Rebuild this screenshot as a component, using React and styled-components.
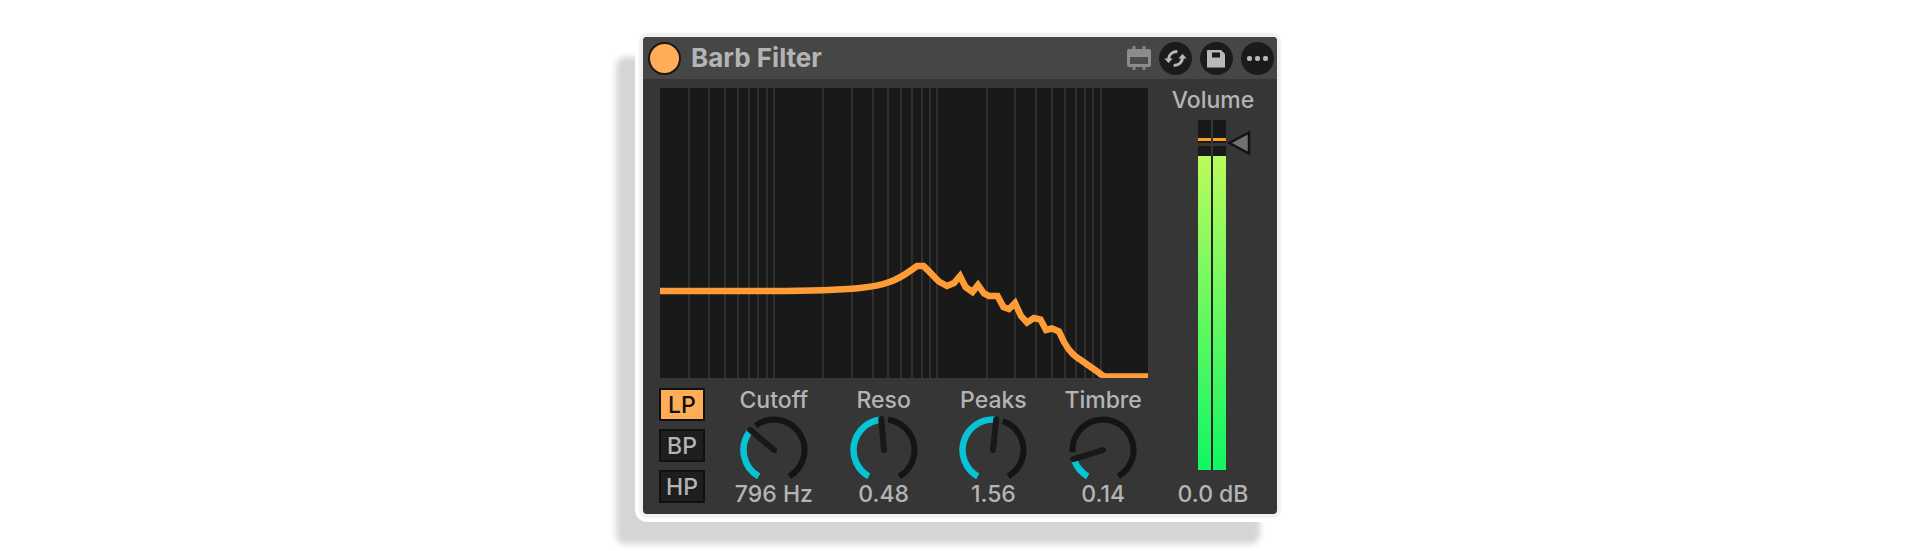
import React, { useState } from 'react';
import styled, { createGlobalStyle } from 'styled-components';

const GlobalStyle = createGlobalStyle`
  * {
    box-sizing: border-box;
  }

  body {
    margin: 0;
    background-color: #fff;
    font-family: Inter, 'Liberation Sans', sans-serif;
  }
`;

const Page = styled.main`
  display: flex;
  justify-content: center;
  padding: 29px 0 30px;
`;

const Frame = styled.div`
  width: 100%;
  max-width: 650px;
  padding: 8px;
  background-color: #fff;
  border-radius: 12px;
  box-shadow: -22px 25px 6px -3px #d5d5d5;
`;

const Device = styled.section`
  color: #b4b4b4;
  background-color: #363636;
  border-radius: 4px;
  box-shadow: 0 0 2px 4px #f0f0f0;
`;

const Header = styled.header`
  display: flex;
  align-items: center;
  height: 42px;
  padding: 0 3px 0 5px;
  background-color: #464646;
  border-radius: 4px 4px 0 0;
`;

const PowerButton = styled.button`
  width: 33px;
  height: 33px;
  padding: 0;
  border: 2px solid #1c1813;
  border-radius: 50%;
  background-color: ${({ $on }) => ($on ? '#ffad56' : '#1c1c1c')};
  cursor: pointer;
`;

const Title = styled.h1`
  flex: 1;
  margin: 0 0 0 10px;
  font-size: 26px;
  font-weight: 700;
  line-height: 30px;
`;

const Actions = styled.div`
  display: flex;
  align-items: center;
  gap: 8px;
`;

const IconButton = styled.button`
  display: flex;
  padding: 0;
  border: none;
  border-radius: 50%;
  background-color: ${({ $plain }) => ($plain ? 'transparent' : '#1b1b1b')};
  color: #b8b8b8;
  cursor: pointer;
`;

const Body = styled.div`
  display: flex;
  padding: 9px 9px 8px 16px;
`;

const Main = styled.div`
  flex: 1;
`;

const GraphWrapper = styled.div`
  margin: 0 10px 10px 1px;

  svg {
    display: block;
    width: 100%;
    height: auto;
    background-color: #191919;
  }
`;

const Controls = styled.div`
  display: flex;
  gap: 14px;
`;

const Modes = styled.div`
  display: flex;
  flex-direction: column;
  gap: 8px;
`;

const Mode = styled.label`
  position: relative;
  display: flex;
  justify-content: center;
  align-items: center;
  width: 46px;
  height: 33px;
  border: 2px solid #111;
  font-size: 23px;
  font-weight: 500;
  line-height: 24px;
  color: ${({ $active }) => ($active ? '#111' : '#b4b4b4')};
  background-color: ${({ $active }) => ($active ? '#ffad56' : '#1e1e1e')};
  cursor: pointer;
`;

const HiddenInput = styled.input`
  position: absolute;
  inset: 0;
  width: 100%;
  height: 100%;
  margin: 0;
  opacity: 0;
  cursor: pointer;
`;

const VolumeInput = styled(HiddenInput)`
  writing-mode: vertical-lr;
  direction: rtl;
`;

const Knobs = styled.div`
  flex: 1;
  display: grid;
  grid-template-columns: repeat(4, 1fr);
`;

const KnobWrapper = styled.div`
  display: flex;
  flex-direction: column;
  align-items: center;
`;

const Label = styled.label`
  font-size: 23px;
  font-weight: 500;
  line-height: 24px;
`;

const Value = styled.output`
  font-size: 23px;
  font-weight: 500;
  line-height: 24px;
`;

const Dial = styled.div`
  position: relative;

  svg {
    display: block;
  }
`;

const VolumeWrapper = styled.div`
  display: flex;
  flex-direction: column;
  align-items: center;
  width: 110px;
`;

const MeterWrapper = styled.div`
  position: relative;
  margin: 8px 0 auto;

  svg {
    display: block;
  }
`;

const MODES = ['LP', 'BP', 'HP'];

const KNOBS = [
  { id: 'cutoff', name: 'Cutoff', min: 20, max: 20000, initial: 796, angle: -50, unit: ' Hz' },
  { id: 'reso', name: 'Reso', min: 0, max: 1, initial: 0.48, angle: -5 },
  { id: 'peaks', name: 'Peaks', min: 0, max: 3, initial: 1.56, angle: 6 },
  { id: 'timbre', name: 'Timbre', min: 0, max: 1, initial: 0.14, angle: -107 },
];

const CURVE =
  'M0 203H112C150 203 175 202.5 200 200C226 197.5 238 191.5 250 183L257 178H263.5' +
  'C270 184 275 190 279 193.5L287 198L294 195L300 188L305.5 199L312.5 204L318 197' +
  'L324 205.5L329 208H337.5L343.5 219L349 221L355 215L361 228L367 234.5L374 230' +
  'L380.5 231.5L386 242L392 240.5L399 243.5L404 254C410 265 416 269 421.5 272.5L438 284' +
  'Q443 288.5 446 288.5H488';

// vertical rules on a log scale, 20 Hz to 20 kHz
const getGridLines = () => {
  const lines = [];
  [10, 100, 1000].forEach((decade) => {
    for (let i = 2; i <= 10; i += 1) {
      const freq = decade * i;
      if (freq > 20) {
        lines.push(Math.round((Math.log10(freq / 20) / 3) * 490));
      }
    }
  });
  return lines;
};

const polar = (angle, r) => {
  const rad = (angle * Math.PI) / 180;
  return `${(35 + r * Math.sin(rad)).toFixed(2)} ${(35 - r * Math.cos(rad)).toFixed(2)}`;
};

const arc = (from, to) =>
  `M${polar(from, 30.5)}A30.5 30.5 0 ${to - from > 180 ? 1 : 0} 1 ${polar(to, 30.5)}`;

const Knob = ({ id, name, min, max, initial, angle, unit = '' }) => {
  const [value, setValue] = useState(initial);
  const current = Math.max(
    -146,
    Math.min(146, angle + ((value - initial) / (max - min)) * 300),
  );

  return (
    <KnobWrapper>
      <Label htmlFor={id}>{name}</Label>
      <Dial>
        <svg width="70" height="70" viewBox="0 -3 70 70" fill="none" aria-hidden="true">
          {current < 137 && (
            <path d={arc(current + 13, 150)} stroke="#141414" strokeWidth="6" />
          )}
          <path d={arc(-150, current - 3)} stroke="#06c3d6" strokeWidth="6.5" />
          <path
            d={`M35 35L${polar(current, 31)}`}
            stroke="#181818"
            strokeWidth="6"
            strokeLinecap="round"
          />
        </svg>
        <HiddenInput
          id={id}
          type="range"
          min={min}
          max={max}
          step={unit ? 1 : 0.01}
          value={value}
          onChange={(e) => setValue(Number(e.target.value))}
        />
      </Dial>
      <Value htmlFor={id}>{unit ? `${value}${unit}` : value.toFixed(2)}</Value>
    </KnobWrapper>
  );
};

const Graph = () => (
  <GraphWrapper>
    <svg viewBox="0 0 488 290" fill="none" role="img" aria-label="Frequency response">
      {getGridLines().map((x) => (
        <rect key={x} x={x - 1} y="0" width="2" height="290" fill="#2f2f2f" />
      ))}
      <path d={CURVE} stroke="#ff9c38" strokeWidth="6.5" />
    </svg>
  </GraphWrapper>
);

const Volume = () => {
  const [volume, setVolume] = useState(0);

  return (
    <VolumeWrapper>
      <Label htmlFor="volume">Volume</Label>
      <MeterWrapper>
        <svg width="78" height="350" viewBox="0 0 78 350" aria-hidden="true">
          <defs>
            <linearGradient id="level" x1="0" y1="0" x2="0" y2="1">
              <stop offset="0" stopColor="#bafb5c" />
              <stop offset="1" stopColor="#10f764" />
            </linearGradient>
          </defs>
          {[24, 39].map((x) => (
            <g key={x}>
              <rect x={x} y="0" width="13" height="23" fill="#191919" />
              <rect x={x} y="18" width="13" height="3" fill="#f5a01e" />
              <rect x={x} y="26" width="13" height="10" fill="#191919" />
              <rect x={x} y="36" width="13" height="314" fill="url(#level)" />
            </g>
          ))}
          <rect x="37" y="36" width="2" height="314" fill="#242424" />
          <path
            d="M55.5 23L75 12.5V33.5Z"
            fill="#707070"
            stroke="#111"
            strokeWidth="2.5"
            transform={`translate(0 ${-volume * 3})`}
          />
        </svg>
        <VolumeInput
          id="volume"
          type="range"
          min="-70"
          max="6"
          step="0.1"
          value={volume}
          onChange={(e) => setVolume(Number(e.target.value))}
        />
      </MeterWrapper>
      <Value htmlFor="volume">{volume.toFixed(1)} dB</Value>
    </VolumeWrapper>
  );
};

const App = () => {
  const [power, setPower] = useState(true);
  const [mode, setMode] = useState('LP');

  return (
    <Page>
      <GlobalStyle />
      <Frame>
        <Device>
          <Header>
            <PowerButton
              type="button"
              aria-label="Device on"
              aria-pressed={power}
              $on={power}
              onClick={() => setPower(!power)}
            />
            <Title>Barb Filter</Title>
            <Actions>
              <IconButton type="button" aria-label="Open editor" $plain>
                <svg width="24" height="24" viewBox="0 0 24 24">
                  <path d="M5.5 0h3v4h-3zM15.5 0h3v4h-3zM5.500 20h3v4h-3zM15.5 20h3v4h-3z" fill="#858585" />
                  <rect x="0" y="3" width="24" height="18" rx="2" fill="#8c8c8c" />
                  <rect x="3" y="11" width="18" height="7" fill="#4b4b4b" />
                </svg>
              </IconButton>
              <IconButton type="button" aria-label="Swap preset">
                <svg width="33" height="33" viewBox="0 0 33 33">
                  <g id="swap">
                    <path
                      d="M18.3 9.5C13.5 9.5 10 12.5 9.5 17"
                      fill="none"
                      stroke="currentColor"
                      strokeWidth="3"
                    />
                    <path d="M5.3 16.5H13.7L9.5 21Z" fill="currentColor" />
                  </g>
                  <use href="#swap" transform="rotate(180 16.5 16.5)" />
                </svg>
              </IconButton>
              <IconButton type="button" aria-label="Save preset">
                <svg width="33" height="33" viewBox="0 0 33 33">
                  <path
                    d="M8 8H21L25 12V25.5H7V9Q7 8 8 8ZM12 10.5V15.5H20V10.5Z"
                    fill="currentColor"
                    fillRule="evenodd"
                  />
                </svg>
              </IconButton>
              <IconButton type="button" aria-label="More">
                <svg width="33" height="33" viewBox="0 0 33 33">
                  {[8, 16, 24].map((x) => (
                    <rect
                      key={x}
                      x={x - 2}
                      y="14"
                      width="5"
                      height="5"
                      rx="2"
                      fill="currentColor"
                    />
                  ))}
                </svg>
              </IconButton>
            </Actions>
          </Header>
          <Body>
            <Main>
              <Graph />
              <Controls>
                <Modes role="radiogroup" aria-label="Filter type">
                  {MODES.map((name) => (
                    <Mode key={name} $active={mode === name}>
                      <HiddenInput
                        type="radio"
                        name="mode"
                        value={name}
                        checked={mode === name}
                        onChange={() => setMode(name)}
                      />
                      {name}
                    </Mode>
                  ))}
                </Modes>
                <Knobs>
                  {KNOBS.map((knob) => (
                    <Knob key={knob.id} {...knob} />
                  ))}
                </Knobs>
              </Controls>
            </Main>
            <Volume />
          </Body>
        </Device>
      </Frame>
    </Page>
  );
};

export default App;
